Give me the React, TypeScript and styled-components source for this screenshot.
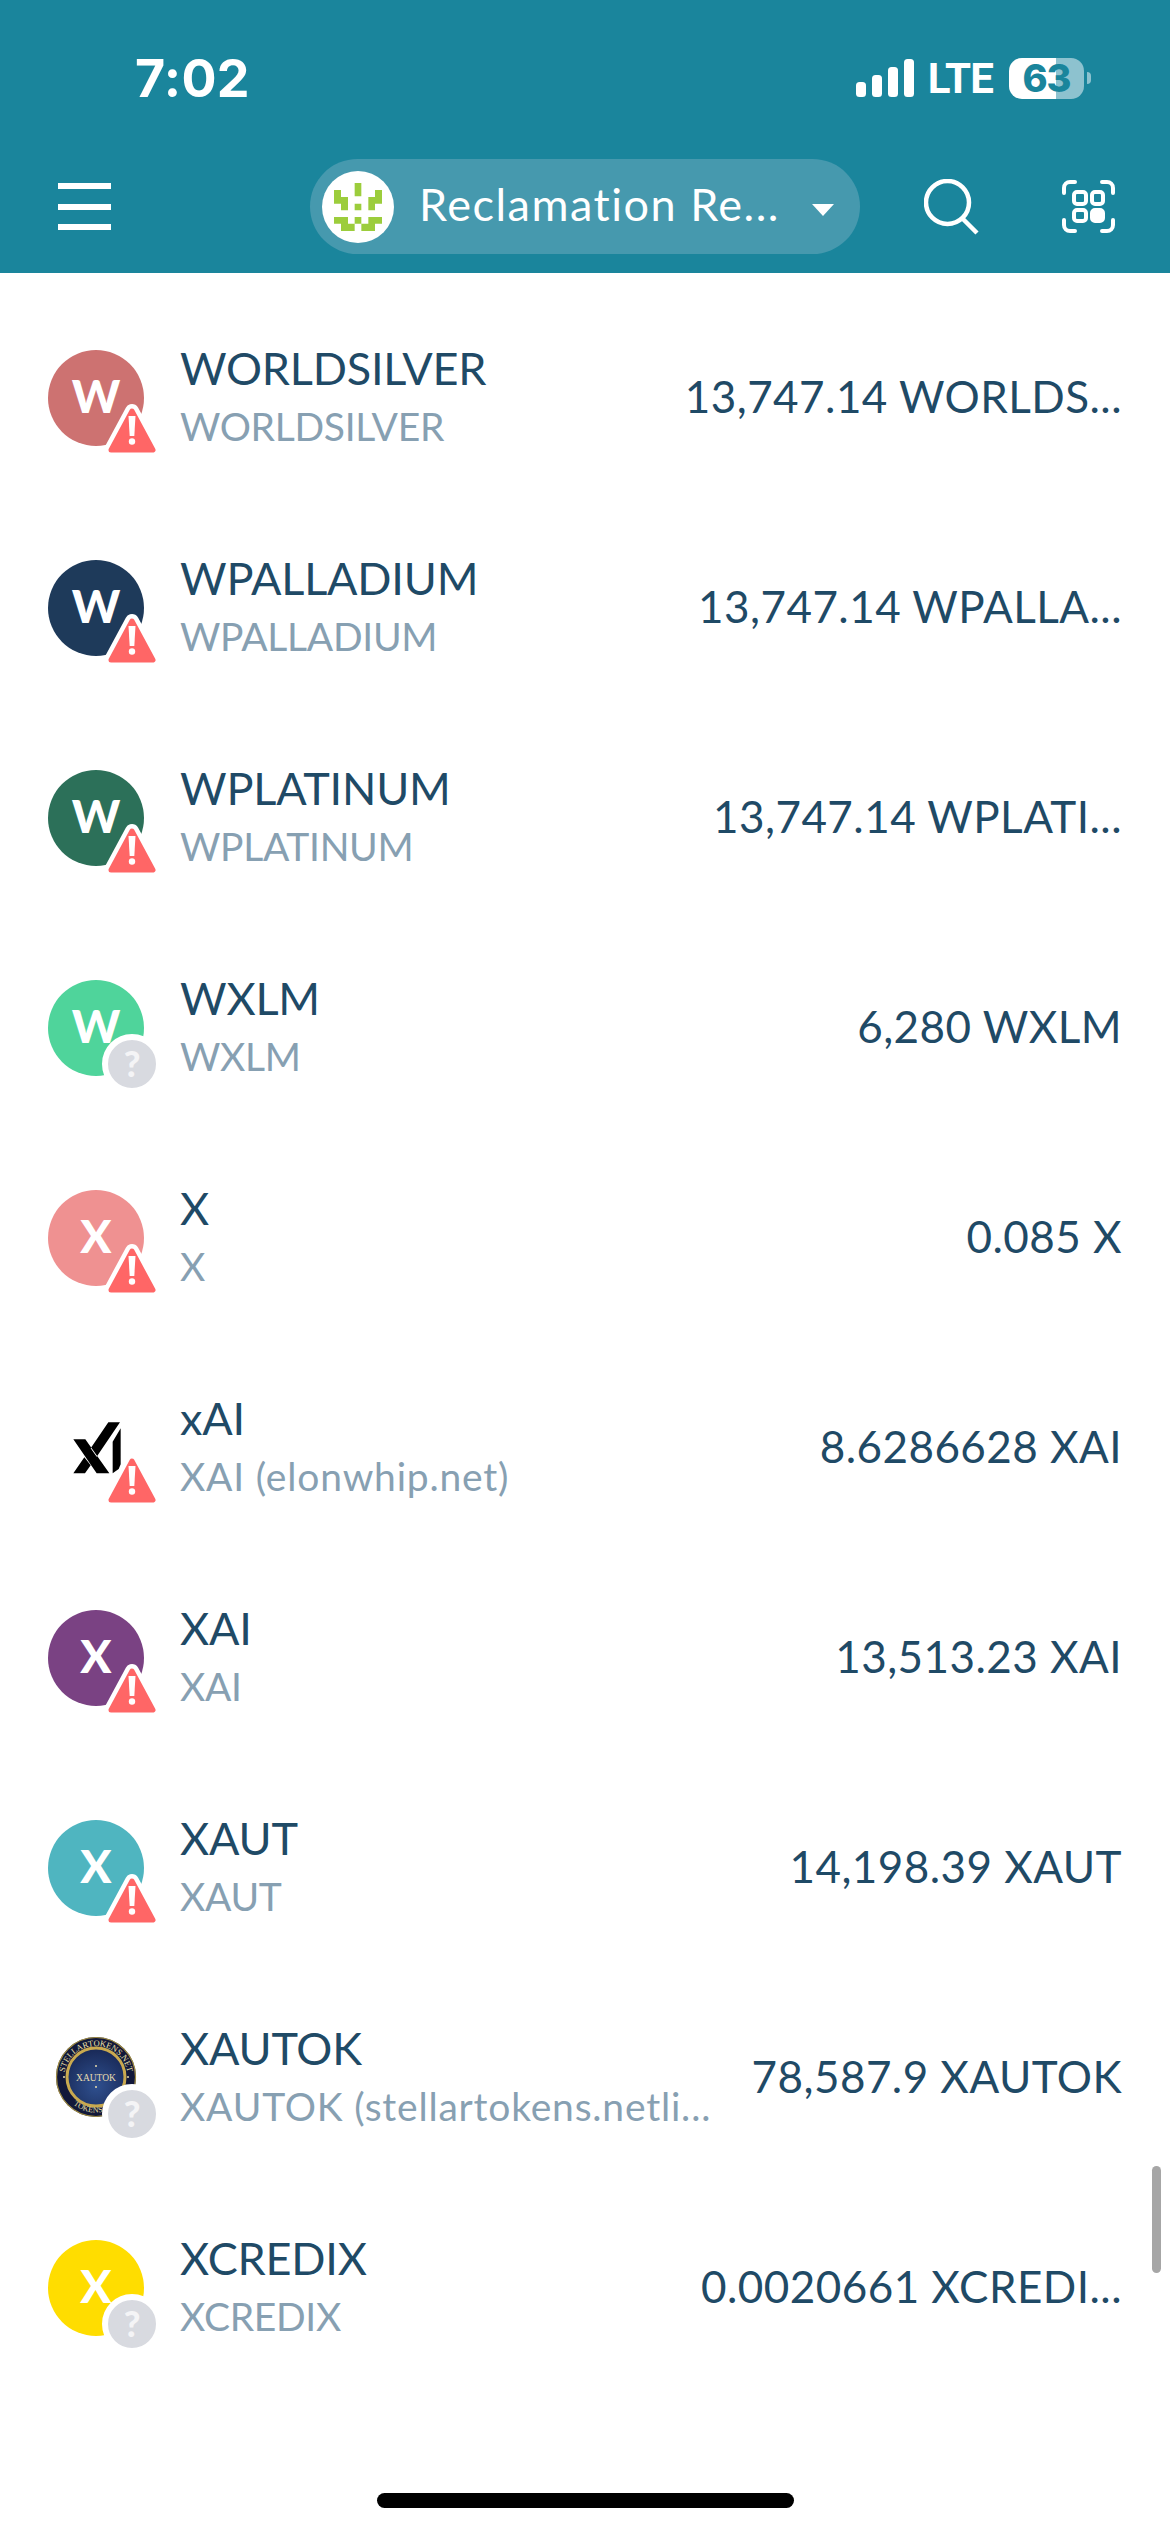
import React from "react";
import styled, { createGlobalStyle } from "styled-components";

const GlobalStyle = createGlobalStyle`
  html, body {
    margin: 0;
    padding: 0;
    background: #ffffff;
  }
  * {
    box-sizing: border-box;
  }
`;

const Screen = styled.div`
  position: relative;
  width: 1170px;
  height: 2532px;
  overflow: hidden;
  background: #ffffff;
  font-family: Lato, "Open Sans", sans-serif;
`;

const Header = styled.header`
  height: 273px;
  background: #1a859c;
  color: #ffffff;
`;

const StatusBar = styled.div`
  height: 156px;
  padding: 0 79px 0 135px;
  display: flex;
  align-items: center;
  justify-content: space-between;
`;

const Time = styled.span`
  font-family: Inter, sans-serif;
  font-size: 52px;
  font-weight: 700;
  letter-spacing: 0.3px;
`;

const StatusIcons = styled.div`
  display: flex;
  align-items: center;
`;

const Network = styled.span`
  margin: 0 16px 0 14px;
  font-family: Roboto, sans-serif;
  font-size: 42px;
  font-weight: 700;
  letter-spacing: -0.8px;
`;

const Battery = styled.div`
  width: 75px;
  height: 41px;
  border-radius: 13px;
  background: linear-gradient(90deg, #ffffff 0 47px, #8dc2cf 47px 100%);
  color: #1a859c;
  font-family: Inter, sans-serif;
  font-size: 38px;
  font-weight: 800;
  letter-spacing: -1px;
  line-height: 41px;
  text-align: center;
`;

const BatteryNub = styled.div`
  width: 4px;
  height: 12px;
  margin-left: 3px;
  border-radius: 0 4px 4px 0;
  background: #8dc2cf;
`;

const NavBar = styled.nav`
  padding: 3px 0 0 58px;
  display: flex;
  align-items: center;
`;

const MenuButton = styled.div`
  width: 53px;
  height: 47px;
  margin-right: 199px;
  display: flex;
  flex-direction: column;
  justify-content: space-between;
`;

const MenuBar = styled.span`
  height: 6px;
  background: #ffffff;
`;

const WalletPill = styled.div`
  width: 550px;
  height: 95px;
  padding-left: 12px;
  border-radius: 48px;
  background: #4699ae;
  display: flex;
  align-items: center;
  margin-right: 64px;
`;

const WalletLogo = styled.div`
  width: 72px;
  height: 72px;
  border-radius: 50%;
  background: #ffffff;
  overflow: hidden;
  flex-shrink: 0;
`;

const WalletName = styled.span`
  margin: 0 0 6px 25px;
  width: 393px;
  font-size: 45px;
  letter-spacing: 1.5px;
  white-space: nowrap;
`;

const Caret = styled.span`
  width: 0;
  height: 0;
  border-left: 11px solid transparent;
  border-right: 11px solid transparent;
  border-top: 12px solid #ffffff;
  margin-top: 6px;
`;

const ScanIcon = styled.svg`
  margin-left: 82px;
`;

const List = styled.main`
  padding-top: 20px;
`;

const Row = styled.div`
  height: 210px;
  padding: 0 48px;
  display: flex;
  align-items: center;
`;

const IconWrap = styled.div`
  position: relative;
  width: 96px;
  height: 96px;
  flex-shrink: 0;
  margin-right: 36px;
`;

const Avatar = styled.div<{ $color: string }>`
  width: 96px;
  height: 96px;
  border-radius: 50%;
  background: ${({ $color }) => $color};
  color: #ffffff;
  font-size: 46px;
  font-weight: 900;
  line-height: 92px;
  text-align: center;
`;

const WarnBadge = styled.svg`
  position: absolute;
  left: 54px;
  top: 50px;
`;

const UnknownBadge = styled.div`
  position: absolute;
  left: 54px;
  top: 54px;
  width: 60px;
  height: 60px;
  border: 6px solid #ffffff;
  border-radius: 50%;
  background: #d8dae0;
  color: #f4f4f6;
  font-size: 36px;
  font-weight: 900;
  line-height: 47px;
  text-align: center;
`;

const Names = styled.div`
  flex: 1;
  min-width: 0;
`;

const Title = styled.div`
  color: #1f4a66;
  font-size: 45px;
  line-height: 60px;
  letter-spacing: -0.2px;
  white-space: nowrap;
`;

const Subtitle = styled.div<{ $domain: boolean }>`
  padding-bottom: 4px;
  color: #87a0b2;
  font-size: 39px;
  line-height: 56px;
  letter-spacing: ${({ $domain }) => ($domain ? "0.8px" : "-0.3px")};
  white-space: nowrap;
`;

const Amount = styled.div`
  padding-bottom: 5px;
  color: #1f4a66;
  font-size: 44px;
  letter-spacing: 0.45px;
  white-space: nowrap;
  text-align: right;
`;

const Scrollbar = styled.div`
  position: absolute;
  left: 1152px;
  top: 2166px;
  width: 9px;
  height: 107px;
  border-radius: 5px;
  background: #a6a6a6;
`;

const HomeIndicator = styled.div`
  position: absolute;
  left: 377px;
  top: 2493px;
  width: 417px;
  height: 15px;
  border-radius: 8px;
  background: #000000;
`;

type Token = {
  title: string;
  subtitle: string;
  amount: string;
  letter?: string;
  color?: string;
  logo?: "xai" | "xautok";
  badge: "warn" | "unknown";
};

const tokens: Token[] = [
  { title: "WORLDSILVER", subtitle: "WORLDSILVER", amount: "13,747.14 WORLDS...", letter: "W", color: "#cd7271", badge: "warn" },
  { title: "WPALLADIUM", subtitle: "WPALLADIUM", amount: "13,747.14 WPALLA...", letter: "W", color: "#1e3a5a", badge: "warn" },
  { title: "WPLATINUM", subtitle: "WPLATINUM", amount: "13,747.14 WPLATI...", letter: "W", color: "#2c7059", badge: "warn" },
  { title: "WXLM", subtitle: "WXLM", amount: "6,280 WXLM", letter: "W", color: "#4fd49b", badge: "unknown" },
  { title: "X", subtitle: "X", amount: "0.085 X", letter: "X", color: "#ef9191", badge: "warn" },
  { title: "xAI", subtitle: "XAI (elonwhip.net)", amount: "8.6286628 XAI", logo: "xai", badge: "warn" },
  { title: "XAI", subtitle: "XAI", amount: "13,513.23 XAI", letter: "X", color: "#7a4283", badge: "warn" },
  { title: "XAUT", subtitle: "XAUT", amount: "14,198.39 XAUT", letter: "X", color: "#4fb5c0", badge: "warn" },
  { title: "XAUTOK", subtitle: "XAUTOK (stellartokens.netli...", amount: "78,587.9 XAUTOK", logo: "xautok", badge: "unknown" },
  { title: "XCREDIX", subtitle: "XCREDIX", amount: "0.0020661 XCREDI...", letter: "X", color: "#ffdd00", badge: "unknown" },
];

const SignalBars = () => (
  <svg width="58" height="38" viewBox="0 0 58 38" fill="#ffffff">
    <rect x="0" y="23" width="10" height="15" rx="3.5" />
    <rect x="16" y="16" width="10" height="22" rx="3.5" />
    <rect x="32" y="8" width="10" height="30" rx="3.5" />
    <rect x="48" y="0" width="10" height="38" rx="3.5" />
  </svg>
);

const ReclamationLogo = () => (
  <svg width="72" height="72" viewBox="0 0 216 216" fill="#9ccd3c">
    <path d="M98 36h20v40H98zM98 98h20v20H98zM36 57h21v21h21v40H57V98H36zM159 57h21v41h-21v20h-20V78h20zM36 138h42v20H36zM57 158h41v22H57zM98 138h20v20H98zM118 158h41v22h-41zM139 138h41v20h-41z" />
  </svg>
);

const SearchIcon = () => (
  <svg width="56" height="56" viewBox="0 0 56 56" fill="none" stroke="#ffffff" strokeWidth="4.5">
    <circle cx="23.5" cy="23.5" r="21.5" />
    <path d="M38 39l15 15" />
  </svg>
);

const QrIcon = () => (
  <ScanIcon width="53" height="53" viewBox="0 0 53 53" fill="none" stroke="#ffffff" strokeWidth="4">
    <path d="M2 13V8a6 6 0 0 1 6-6h5M40 2h5a6 6 0 0 1 6 6v5M51 40v5a6 6 0 0 1-6 6h-5M13 51H8a6 6 0 0 1-6-6v-5" strokeLinecap="round" />
    <rect x="12" y="12" width="12" height="12" rx="3" />
    <rect x="30" y="12" width="11" height="12" rx="3" />
    <rect x="12" y="30" width="12" height="11" rx="3" />
    <rect x="30" y="30" width="11" height="11" rx="3" fill="#ffffff" />
  </ScanIcon>
);

const XaiLogo = () => (
  <svg width="96" height="96" viewBox="-6 0 288 288" fill="#000000">
    <path d="M70 118h36l72 102h-38zM70 220l33-48 19 24-17 24zM210 67h-35l-53 78 18 25zM188 125l24-40v108l-6 14-18 13z" />
  </svg>
);

const XautokLogo = () => (
  <svg width="96" height="96" viewBox="0 0 96 96">
    <defs>
      <radialGradient id="medalFill" cx="50%" cy="65%" r="60%">
        <stop offset="0%" stopColor="#2f508f" />
        <stop offset="100%" stopColor="#1a2b5a" />
      </radialGradient>
      <path id="medalTop" d="M16 48a32 32 0 1 1 64 0" />
      <path id="medalBottom" d="M12 52a36.5 36.5 0 0 0 72 0" />
    </defs>
    <circle cx="48" cy="47" r="40" fill="#12183a" />
    <circle cx="48" cy="47" r="39.5" fill="none" stroke="#a08c42" strokeWidth="1.2" />
    <circle cx="48" cy="47" r="29" fill="url(#medalFill)" stroke="#c9a94f" strokeWidth="3" />
    <text fontFamily="Liberation Serif, serif" fontSize="8.5" fill="#efe3aa">
      <textPath href="#medalTop" startOffset="50%" textAnchor="middle">STELLARTOKENS.NET</textPath>
    </text>
    <text fontFamily="Liberation Serif, serif" fontSize="8" fill="#efe3aa">
      <textPath href="#medalBottom" startOffset="50%" textAnchor="middle">TOKENS.NET</textPath>
    </text>
    <text x="48" y="50.5" textAnchor="middle" fontFamily="Liberation Serif, serif" fontSize="9.5" fill="#e8dcae">XAUTOK</text>
    <circle cx="48" cy="36" r="1" fill="#e8dcae" />
    <circle cx="48" cy="57" r="1" fill="#e8dcae" />
    <circle cx="16" cy="47" r="1" fill="#e8dcae" />
    <circle cx="80" cy="47" r="1" fill="#e8dcae" />
  </svg>
);

const WarningBadge = ({ ring }: { ring: boolean }) => (
  <WarnBadge width="60" height="60" viewBox="0 0 60 60">
    {ring && (
      <path d="M30 11 L51 50 H9 Z" fill="#ffffff" stroke="#ffffff" strokeWidth="14" strokeLinejoin="round" />
    )}
    <path d="M30 11 L51 50 H9 Z" fill="#ff6666" stroke="#ff6666" strokeWidth="5" strokeLinejoin="round" />
    <path d="M26.5 16h7l-1.2 20h-4.6z" fill="#ffffff" />
    <circle cx="30" cy="41.5" r="3.2" fill="#ffffff" />
  </WarnBadge>
);

const TokenIcon = ({ token }: { token: Token }) => (
  <IconWrap>
    {token.logo === "xai" && <XaiLogo />}
    {token.logo === "xautok" && <XautokLogo />}
    {token.letter && <Avatar $color={token.color ?? "#cccccc"}>{token.letter}</Avatar>}
    {token.badge === "warn" ? (
      <WarningBadge ring={token.logo !== "xai"} />
    ) : (
      <UnknownBadge>?</UnknownBadge>
    )}
  </IconWrap>
);

export default function App() {
  return (
    <Screen>
      <GlobalStyle />
      <Header>
        <StatusBar>
          <Time>7:02</Time>
          <StatusIcons>
            <SignalBars />
            <Network>LTE</Network>
            <Battery>63</Battery>
            <BatteryNub />
          </StatusIcons>
        </StatusBar>
        <NavBar>
          <MenuButton>
            <MenuBar />
            <MenuBar />
            <MenuBar />
          </MenuButton>
          <WalletPill>
            <WalletLogo>
              <ReclamationLogo />
            </WalletLogo>
            <WalletName>Reclamation Re...</WalletName>
            <Caret />
          </WalletPill>
          <SearchIcon />
          <QrIcon />
        </NavBar>
      </Header>
      <List>
        {tokens.map((token) => (
          <Row key={token.title}>
            <TokenIcon token={token} />
            <Names>
              <Title>{token.title}</Title>
              <Subtitle $domain={token.subtitle.includes("(")}>{token.subtitle}</Subtitle>
            </Names>
            <Amount>{token.amount}</Amount>
          </Row>
        ))}
      </List>
      <Scrollbar />
      <HomeIndicator />
    </Screen>
  );
}
